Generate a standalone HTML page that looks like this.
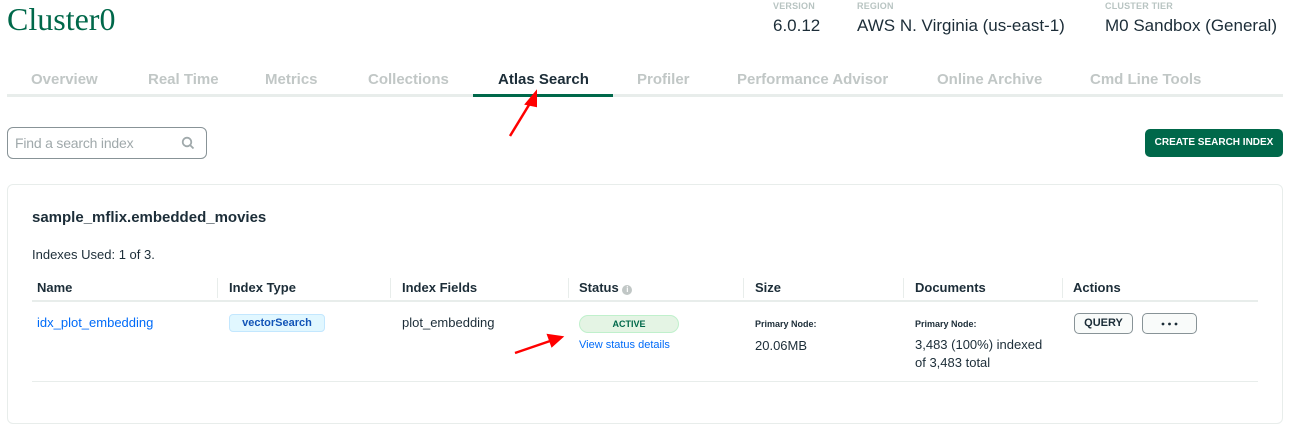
<!DOCTYPE html>
<html><head><meta charset="utf-8"><style>
*{margin:0;padding:0;box-sizing:border-box}
body{width:1302px;height:407px;background:#fff;position:relative;overflow:hidden;font-family:"Liberation Sans",sans-serif;color:#1c2d38}
.a{position:absolute;white-space:nowrap}
.tab{position:absolute;top:71px;font-size:15px;font-weight:bold;color:#c1c7c6}
.lbl{font-size:9px;font-weight:bold;color:#b8c4c2;letter-spacing:.2px}
.val{font-size:17px;color:#1c2d38}
.th{position:absolute;top:280px;font-size:13px;font-weight:bold;color:#1c2d38}
.sep{position:absolute;top:278px;width:1px;height:20px;background:#e8edeb}
</style></head><body>
<div class="a" style="left:7px;top:1px;font-family:'Liberation Serif',serif;font-size:32px;color:#00684a">Cluster0</div>

<div class="a lbl" style="left:773px;top:1px">VERSION</div>
<div class="a val" style="left:773px;top:16px">6.0.12</div>
<div class="a lbl" style="left:857px;top:1px">REGION</div>
<div class="a val" style="left:857px;top:16px">AWS N. Virginia (us-east-1)</div>
<div class="a lbl" style="left:1105px;top:1px">CLUSTER TIER</div>
<div class="a val" style="left:1105px;top:16px">M0 Sandbox (General)</div>

<div class="tab" style="left:31px">Overview</div>
<div class="tab" style="left:148px">Real Time</div>
<div class="tab" style="left:265px">Metrics</div>
<div class="tab" style="left:368px">Collections</div>
<div class="tab" style="left:498px;color:#1c2d38">Atlas Search</div>
<div class="tab" style="left:637px">Profiler</div>
<div class="tab" style="left:737px">Performance Advisor</div>
<div class="tab" style="left:937px">Online Archive</div>
<div class="tab" style="left:1090px">Cmd Line Tools</div>
<div class="a" style="left:7px;top:94px;width:1276px;height:3px;background:#e8edeb"></div>
<div class="a" style="left:473px;top:94px;width:140px;height:3px;background:#00684a"></div>

<div class="a" style="left:7px;top:127px;width:200px;height:32px;border:1px solid #889397;border-radius:6px"></div>
<div class="a" style="left:15px;top:135px;font-size:14px;color:#a0a9ab;letter-spacing:-.2px">Find a search index</div>
<svg class="a" style="left:181px;top:136px" width="14" height="14" viewBox="0 0 14 14"><circle cx="6" cy="6" r="4.3" fill="none" stroke="#a0a9ab" stroke-width="1.8"/><path d="M9 9l3.5 3.5" stroke="#a0a9ab" stroke-width="1.8"/></svg>

<div class="a" style="left:1145px;top:129px;width:138px;height:28px;background:#00684a;border-radius:5px;color:#fff;font-size:10px;font-weight:bold;text-align:center;line-height:28px">CREATE SEARCH INDEX</div>

<div class="a" style="left:7px;top:184px;width:1276px;height:240px;border:1px solid #e8edeb;border-radius:6px"></div>
<div class="a" style="left:32px;top:209px;font-size:15px;font-weight:bold">sample_mflix.embedded_movies</div>
<div class="a" style="left:32px;top:247px;font-size:13px">Indexes Used: 1 of 3.</div>

<div class="th" style="left:37px">Name</div>
<div class="sep" style="left:217px"></div>
<div class="th" style="left:229px">Index Type</div>
<div class="sep" style="left:390px"></div>
<div class="th" style="left:402px">Index Fields</div>
<div class="sep" style="left:568px"></div>
<div class="th" style="left:579px">Status <span style="display:inline-block;width:10px;height:10px;border-radius:50%;background:#c1c7c6;color:#fff;font-size:8px;text-align:center;line-height:10px;vertical-align:0">i</span></div>
<div class="sep" style="left:743px"></div>
<div class="th" style="left:755px">Size</div>
<div class="sep" style="left:903px"></div>
<div class="th" style="left:915px">Documents</div>
<div class="sep" style="left:1062px"></div>
<div class="th" style="left:1073px">Actions</div>
<div class="a" style="left:32px;top:300px;width:1226px;height:2px;background:#e8edeb"></div>

<div class="a" style="left:37px;top:315px;font-size:13px;color:#016bf8">idx_plot_embedding</div>
<div class="a" style="left:229px;top:314px;width:96px;height:18px;background:#e1f7ff;border:1px solid #c3e7fe;border-radius:4px;color:#1254b7;font-size:11px;font-weight:bold;text-align:center;line-height:16px">vectorSearch</div>
<div class="a" style="left:402px;top:315px;font-size:13px">plot_embedding</div>
<div class="a" style="left:579px;top:315px;width:100px;height:18px;border:1px solid #c0f0cc;border-radius:9px;color:#00684a;font-size:9px;font-weight:bold;text-align:center;line-height:16px;background:#e4f4e4">ACTIVE</div>
<div class="a" style="left:579px;top:339px;font-size:11px;color:#016bf8">View status details</div>
<div class="a" style="left:755px;top:319px;font-size:9px;font-weight:bold">Primary Node:</div>
<div class="a" style="left:755px;top:338px;font-size:13px">20.06MB</div>
<div class="a" style="left:915px;top:319px;font-size:9px;font-weight:bold">Primary Node:</div>
<div class="a" style="left:915px;top:336px;font-size:13px;line-height:18px">3,483 (100%) indexed<br>of 3,483 total</div>
<div class="a" style="left:1074px;top:313px;width:59px;height:21px;border:1px solid #889397;border-radius:5px;background:#f9fbfa;font-size:11px;font-weight:bold;text-align:center;line-height:19px">QUERY</div>
<div class="a" style="left:1142px;top:313px;width:55px;height:21px;border:1px solid #889397;border-radius:5px;background:#f9fbfa"><svg width="53" height="19" style="display:block"><circle cx="20" cy="10" r="1.4" fill="#1c2d38"/><circle cx="26.5" cy="10" r="1.4" fill="#1c2d38"/><circle cx="33" cy="10" r="1.4" fill="#1c2d38"/></svg></div>
<div class="a" style="left:32px;top:381px;width:1226px;height:1px;background:#e8edeb"></div>

<svg class="a" style="left:0;top:0" width="1302" height="407">
<path d="M510 136L532 100" stroke="#f00" stroke-width="2.5"/><path d="M536 92L526 104L536 106Z" fill="#f00" stroke="#f00" stroke-width="2"/>
<path d="M515 353L553 340" stroke="#f00" stroke-width="2.5"/><path d="M562 337L548 335L552 346Z" fill="#f00" stroke="#f00" stroke-width="2"/>
</svg>
</body></html>
